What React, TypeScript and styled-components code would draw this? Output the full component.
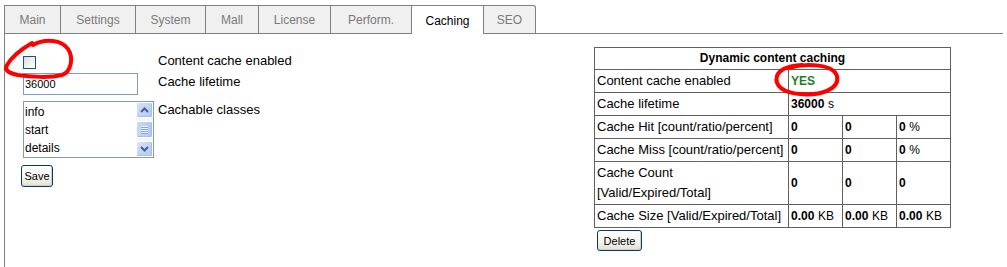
import React from 'react';
import styled, { createGlobalStyle } from 'styled-components';

const GlobalStyle = createGlobalStyle`
  html, body {
    margin: 0;
    padding: 0;
    background: #ffffff;
    overflow: hidden;
  }
  body {
    font-family: "Liberation Sans", Arial, sans-serif;
    font-size: 13px;
    color: #000000;
  }
`;

const tabs = [
  { label: 'Main', width: 56 },
  { label: 'Settings', width: 75 },
  { label: 'System', width: 70 },
  { label: 'Mall', width: 53 },
  { label: 'License', width: 72 },
  { label: 'Perform.', width: 81 },
  { label: 'Caching', width: 72, active: true },
  { label: 'SEO', width: 53, last: true },
];

const Chevron = ({ up }: { up?: boolean }) => (
  <svg width="9" height="6" viewBox="0 0 9 6">
    <polyline
      points={up ? '1,5 4.5,1.5 8,5' : '1,1 4.5,4.5 8,1'}
      fill="none"
      stroke="#4d6185"
      strokeWidth="2"
    />
  </svg>
);

const App = () => (
  <Page>
    <GlobalStyle />
    <TabStrip>
      {tabs.map((t) => (
        <Tab key={t.label} $width={t.width} $active={t.active} $last={t.last}>
          {t.label}
        </Tab>
      ))}
    </TabStrip>
    <Panel>
      <Form>
        <FieldRow>
          <Checkbox type="checkbox" />
          <Label>Content cache enabled</Label>
        </FieldRow>
        <FieldRow>
          <TextInput defaultValue="36000" />
          <Label>Cache lifetime</Label>
        </FieldRow>
        <FieldRow $gap={6}>
          <ListBox>
            <ListItems>
              <ListItem>info</ListItem>
              <ListItem>start</ListItem>
              <ListItem>details</ListItem>
            </ListItems>
            <ScrollBar>
              <ScrollButton>
                <Chevron up />
              </ScrollButton>
              <ScrollThumb>
                <Grip />
                <Grip />
                <Grip />
                <Grip />
              </ScrollThumb>
              <ScrollButton>
                <Chevron />
              </ScrollButton>
            </ScrollBar>
          </ListBox>
          <Label>Cachable classes</Label>
        </FieldRow>
        <XpButton $width={32}>Save</XpButton>
      </Form>

      <StatsBlock>
        <StatsTable>
          <colgroup>
            <Col $w={194} />
            <Col $w={54} />
            <Col $w={54} />
            <Col $w={54} />
          </colgroup>
          <tbody>
            <tr>
              <HeadCell colSpan={4}>Dynamic content caching</HeadCell>
            </tr>
            <tr>
              <Cell>Content cache enabled</Cell>
              <Cell colSpan={3}>
                <Yes>YES</Yes>
              </Cell>
            </tr>
            <tr>
              <Cell>Cache lifetime</Cell>
              <Cell colSpan={3}>
                <Num>36000</Num> <Unit>s</Unit>
              </Cell>
            </tr>
            <tr>
              <Cell>Cache Hit [count/ratio/percent]</Cell>
              <Cell><Num>0</Num></Cell>
              <Cell><Num>0</Num></Cell>
              <Cell><Num>0</Num> <Unit>%</Unit></Cell>
            </tr>
            <tr>
              <Cell>Cache Miss [count/ratio/percent]</Cell>
              <Cell><Num>0</Num></Cell>
              <Cell><Num>0</Num></Cell>
              <Cell><Num>0</Num> <Unit>%</Unit></Cell>
            </tr>
            <tr>
              <Cell>
                Cache Count
                <br />
                [Valid/Expired/Total]
              </Cell>
              <Cell><Num>0</Num></Cell>
              <Cell><Num>0</Num></Cell>
              <Cell><Num>0</Num></Cell>
            </tr>
            <tr>
              <Cell>Cache Size [Valid/Expired/Total]</Cell>
              <Cell><Num>0.00</Num> <Unit>KB</Unit></Cell>
              <Cell><Num>0.00</Num> <Unit>KB</Unit></Cell>
              <Cell><Num>0.00</Num> <Unit>KB</Unit></Cell>
            </tr>
          </tbody>
        </StatsTable>
        <XpButton $width={45} $height={21} $offset={3}>Delete</XpButton>
      </StatsBlock>
    </Panel>

    {/* hand-drawn red marks over the screenshot */}
    <Scribbles width="1007" height="267" viewBox="0 0 1007 267">
      <path d="M 33 45 C 45 38, 62 40, 68 49 C 74 58, 71 72, 62 75 C 50 78, 30 77, 18 75 C 8 73, 4 70, 7 65 C 11 58, 20 50, 32 43" />
      <path d="M 788 68 C 808 62, 834 65, 837 76 C 840 89, 821 96, 800 94 C 784 93, 774 86, 777 76 C 779 70, 787 66, 802 65" />
    </Scribbles>
  </Page>
);

export default App;

const Page = styled.div`
  position: relative;
  padding: 5px 4px 0 4px;
  height: 267px;
  box-sizing: border-box;
`;

const TabStrip = styled.div`
  position: relative;
  z-index: 1;
  display: flex;
  align-items: flex-start;
  height: 28px;
`;

const Tab = styled.div<{ $width: number; $active?: boolean; $last?: boolean }>`
  box-sizing: border-box;
  width: ${(p) => p.$width}px;
  height: ${(p) => (p.$active ? 29 : 28)}px;
  padding-top: 1px;
  display: flex;
  align-items: center;
  justify-content: center;
  border-top: 1px solid #808080;
  border-left: 1px solid #808080;
  border-right: ${(p) => (p.$last ? '1px solid #808080' : 'none')};
  border-top-right-radius: ${(p) => (p.$last ? '3px' : '0')};
  background: ${(p) => (p.$active ? '#ffffff' : '#f0f0f0')};
  color: ${(p) => (p.$active ? '#000000' : '#7a7a7a')};
  font-size: 12px;
`;

const Panel = styled.div`
  box-sizing: border-box;
  height: 234px;
  display: flex;
  align-items: flex-start;
  padding: 13px 52px 0 16px;
  border-top: 1px solid #808080;
  border-left: 1px solid #808080;
`;

const Form = styled.div`
  display: flex;
  flex-direction: column;
  align-items: flex-start;
  padding-top: 5px;
`;

const FieldRow = styled.div<{ $gap?: number }>`
  display: grid;
  grid-template-columns: 137px auto;
  align-items: start;
  margin-top: ${(p) => p.$gap ?? 0}px;
  min-height: 21px;
`;

const Label = styled.span`
  line-height: 18px;
  font-size: 13px;
  white-space: nowrap;
`;

const Checkbox = styled.input`
  appearance: none;
  box-sizing: border-box;
  width: 13px;
  height: 13px;
  margin: 4px 0 0 2px;
  border: 1px solid #1c5180;
  background: linear-gradient(135deg, #dcdcd7 0%, #f2f2ee 55%, #ffffff 100%);
`;

const TextInput = styled.input`
  box-sizing: border-box;
  width: 115px;
  height: 22px;
  margin: 0 0 0 2px;
  padding: 0 1px;
  border: 1px solid #7f9db9;
  font-family: "Liberation Sans", Arial, sans-serif;
  font-size: 11px;
  color: #000000;
  outline: none;
`;

const ListBox = styled.div`
  box-sizing: border-box;
  width: 131px;
  height: 57px;
  margin-left: 2px;
  display: flex;
  border: 1px solid #7f9db9;
  background: #ffffff;
`;

const ListItems = styled.div`
  flex: 1;
  padding: 1px 0 0 1px;
`;

const ListItem = styled.div`
  line-height: 18px;
  font-size: 12px;
`;

const ScrollBar = styled.div`
  width: 17px;
  display: flex;
  flex-direction: column;
  justify-content: space-between;
  background: #f6f5f0;
`;

const ScrollButton = styled.div`
  box-sizing: border-box;
  height: 16px;
  display: flex;
  align-items: center;
  justify-content: center;
  border: 1px solid #ffffff;
  border-radius: 2px;
  background: linear-gradient(135deg, #d7e3fe 0%, #c1d3fb 50%, #b3c8f5 100%);
  box-shadow: inset -1px -1px 0 #a8bde9;
`;

const ScrollThumb = styled.div`
  box-sizing: border-box;
  height: 17px;
  display: flex;
  flex-direction: column;
  align-items: center;
  justify-content: center;
  gap: 1px;
  border: 1px solid #ffffff;
  border-radius: 2px;
  background: linear-gradient(90deg, #c9d8fc 0%, #bccffb 60%, #b1c6f5 100%);
  box-shadow: inset -1px -1px 0 #a8bde9;
`;

const Grip = styled.span`
  width: 7px;
  height: 1px;
  background: #eef3fe;
  box-shadow: 0 1px 0 #8ca2d6;
`;

const XpButton = styled.button<{ $width: number; $height?: number; $offset?: number }>`
  box-sizing: border-box;
  width: ${(p) => p.$width}px;
  height: ${(p) => p.$height ?? 22}px;
  margin: 7px 0 0 ${(p) => p.$offset ?? 0}px;
  padding: 0;
  border: 1px solid #003c74;
  border-radius: 3px;
  background: linear-gradient(180deg, #ffffff 0%, #f4f3ee 60%, #e3e0d2 100%);
  box-shadow: inset -1px -1px 0 #d6d0c0;
  font-family: "Liberation Sans", Arial, sans-serif;
  font-size: 11px;
  color: #000000;
`;

const StatsBlock = styled.div`
  margin-left: auto;
  display: flex;
  flex-direction: column;
  align-items: flex-start;

  ${XpButton} {
    margin-top: 2px;
  }
`;

const StatsTable = styled.table`
  border-collapse: collapse;
  table-layout: fixed;
  width: 356px;
  border: 1px solid #606060;
`;

const Col = styled.col<{ $w: number }>`
  width: ${(p) => p.$w}px;
`;

const HeadCell = styled.th`
  border: 1px solid #606060;
  padding: 1px 2px;
  line-height: 19px;
  font-size: 12px;
  font-weight: bold;
  text-align: center;
`;

const Cell = styled.td`
  border: 1px solid #606060;
  padding: 1px 2px;
  line-height: 20px;
  font-size: 13px;
  white-space: nowrap;
  vertical-align: middle;
`;

const Num = styled.b`
  font-size: 12px;
`;

const Unit = styled.span`
  font-size: 12px;
`;

const Yes = styled.b`
  font-size: 12px;
  color: #1e7f1e;
`;

const Scribbles = styled.svg`
  position: absolute;
  top: 0;
  left: 0;
  pointer-events: none;
  fill: none;
  stroke: #ff0000;
  stroke-width: 4;
  stroke-linecap: round;
  stroke-linejoin: round;
`;
